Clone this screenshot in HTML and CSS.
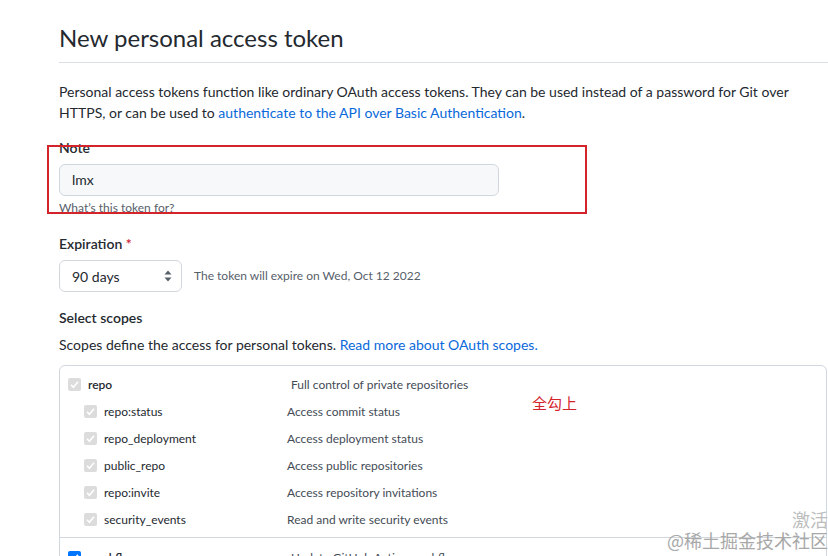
FILE: index.html
```html
<!DOCTYPE html>
<html lang="en">
<head>
<meta charset="utf-8">
<title>New personal access token</title>
<link rel="stylesheet" href="styles.css">
</head>
<body>
<main class="page">
  <h1 class="title">New personal access token</h1>
  <p class="intro">Personal access tokens function like ordinary OAuth access tokens. They can be used instead of a password for Git over<br>HTTPS, or can be used to <a href="#">authenticate to the API over Basic Authentication</a>.</p>

  <div class="group note-group">
    <label class="label">Note</label>
    <div class="input">lmx</div>
    <p class="hint">What’s this token for?</p>
    <div class="annot-box"></div>
  </div>

  <div class="group">
    <label class="label">Expiration <span class="req">*</span></label>
    <div class="exp-row">
      <div class="select">
        <span>90 days</span>
        <svg class="updown" width="8" height="12" viewBox="0 0 8 12"><path d="M4 0.5 L7.5 4.5 H0.5 Z M4 11.5 L7.5 7.5 H0.5 Z" fill="#57606a"/></svg>
      </div>
      <span class="exp-note">The token will expire on Wed, Oct 12 2022</span>
    </div>
  </div>

  <div class="group">
    <label class="label">Select scopes</label>
    <p class="scopes-desc">Scopes define the access for personal tokens. <a href="#">Read more about OAuth scopes.</a></p>
  </div>

  <div class="scopes">
    <div class="scope-group">
      <div class="row top">
        <span class="cb dis"><svg viewBox="0 0 13 13"><path d="M3 6.8 L5.4 9.2 L10 3.8" fill="none" stroke="#fff" stroke-width="1.6"/></svg></span>
        <span class="name strong">repo</span>
        <span class="desc">Full control of private repositories</span>
      </div>
      <div class="row sub">
        <span class="cb dis"><svg viewBox="0 0 13 13"><path d="M3 6.8 L5.4 9.2 L10 3.8" fill="none" stroke="#fff" stroke-width="1.6"/></svg></span>
        <span class="name">repo:status</span>
        <span class="desc">Access commit status</span>
      </div>
      <div class="row sub">
        <span class="cb dis"><svg viewBox="0 0 13 13"><path d="M3 6.8 L5.4 9.2 L10 3.8" fill="none" stroke="#fff" stroke-width="1.6"/></svg></span>
        <span class="name">repo_deployment</span>
        <span class="desc">Access deployment status</span>
      </div>
      <div class="row sub">
        <span class="cb dis"><svg viewBox="0 0 13 13"><path d="M3 6.8 L5.4 9.2 L10 3.8" fill="none" stroke="#fff" stroke-width="1.6"/></svg></span>
        <span class="name">public_repo</span>
        <span class="desc">Access public repositories</span>
      </div>
      <div class="row sub">
        <span class="cb dis"><svg viewBox="0 0 13 13"><path d="M3 6.8 L5.4 9.2 L10 3.8" fill="none" stroke="#fff" stroke-width="1.6"/></svg></span>
        <span class="name">repo:invite</span>
        <span class="desc">Access repository invitations</span>
      </div>
      <div class="row sub">
        <span class="cb dis"><svg viewBox="0 0 13 13"><path d="M3 6.8 L5.4 9.2 L10 3.8" fill="none" stroke="#fff" stroke-width="1.6"/></svg></span>
        <span class="name">security_events</span>
        <span class="desc">Read and write security events</span>
      </div>
      <span class="annot-text">全勾上</span>
    </div>
    <div class="scope-group">
      <div class="row top wf">
        <span class="cb on"><svg viewBox="0 0 13 13"><path d="M3 6.8 L5.4 9.2 L10 3.8" fill="none" stroke="#fff" stroke-width="1.8"/></svg></span>
        <span class="name strong">workflow</span>
        <span class="desc">Update GitHub Action workflows</span>
      </div>
    </div>
  </div>
</main>
<div class="wm wm1">激活</div>
<div class="wm wm2">@稀土掘金技术社区</div>
</body>
</html>
```
FILE: styles.css
```css
* { box-sizing: border-box; }
html, body { margin: 0; padding: 0; background: #fff; }
body {
  font-family: "Segoe UI", Lato, "Noto Sans", "Noto Sans CJK SC", sans-serif;
  color: #24292f;
  font-size: 14px;
  overflow: hidden;
  height: 556px;
  position: relative;
}
a { color: #0969da; text-decoration: none; }
.page {
  padding: 23px 0 0 59px;
  width: 828px;
}
.title {
  margin: 0;
  font-size: 24px;
  font-weight: 400;
  line-height: 30px;
  padding-bottom: 9px;
  border-bottom: 1px solid #d8dee4;
}
.intro {
  margin: 18px 0 0;
  line-height: 21px;
}
.group { position: relative; }
.note-group { margin-top: 15px; width: 440px; }
.label {
  display: block;
  font-weight: 600;
  line-height: 20px;
  font-size: 14px;
}
.req { color: #cf222e; }
.input {
  margin-top: 6px;
  height: 32px;
  width: 440px;
  border: 1px solid #d0d7de;
  border-radius: 6px;
  background: #f6f8fa;
  padding: 0 12px;
  line-height: 30px;
}
.hint {
  margin: 3px 0 0;
  font-size: 12px;
  line-height: 18px;
  color: #57606a;
}
.annot-box {
  position: absolute;
  left: -12px;
  top: 7px;
  width: 540px;
  height: 69px;
  border: 2px solid #d3242b;
}
.group + .group { margin-top: 17px; }
.exp-row {
  margin-top: 6px;
  display: flex;
  align-items: center;
  gap: 12px;
}
.select {
  width: 123px;
  height: 32px;
  border: 1px solid #d0d7de;
  border-radius: 6px;
  background: #fff;
  display: flex;
  align-items: center;
  justify-content: space-between;
  padding: 0 9px 0 12px;
}
.exp-note { font-size: 12px; color: #57606a; line-height: 16px; margin-top: -1px; }
.group:nth-of-type(3) { margin-top: 16px; }
.scopes-desc {
  margin: 6px 0 0;
  line-height: 21px;
}
.scopes {
  margin-top: 10px;
  width: 768px;
  border: 1px solid #d0d7de;
  border-radius: 6px;
}
.scope-group {
  position: relative;
  padding: 5px 8px 4px;
}
.scope-group + .scope-group {
  border-top: 1px solid #d0d7de;
  padding-top: 6px;
}
.row {
  display: flex;
  align-items: center;
  height: 27px;
  font-size: 12px;
}
.row.sub { padding-left: 16px; }
.cb {
  width: 13px;
  height: 13px;
  border-radius: 2px;
  flex: none;
  display: block;
}
.cb svg { width: 13px; height: 13px; display: block; }
.cb.dis { background: #dcdcdc; }
.cb.on { background: #0075ff; }
.name {
  margin-left: 7px;
  width: 203px;
  color: #24292f;
}
.row.sub .name { width: 183px; }
.name.strong { font-weight: 600; }
.desc { color: #444c56; }
.annot-text {
  position: absolute;
  left: 472px;
  top: 26px;
  font-family: "Noto Sans CJK SC", sans-serif;
  font-size: 15px;
  color: #d3242b;
}
.wm {
  position: absolute;
  font-family: "Noto Sans CJK SC", sans-serif;
  font-size: 18px;
  line-height: 24px;
  white-space: nowrap;
}
.wm1 { left: 792px; top: 507px; color: #bdbdbd; }
.wm2 { left: 667px; top: 528px; color: #a8a8a8; }
```
